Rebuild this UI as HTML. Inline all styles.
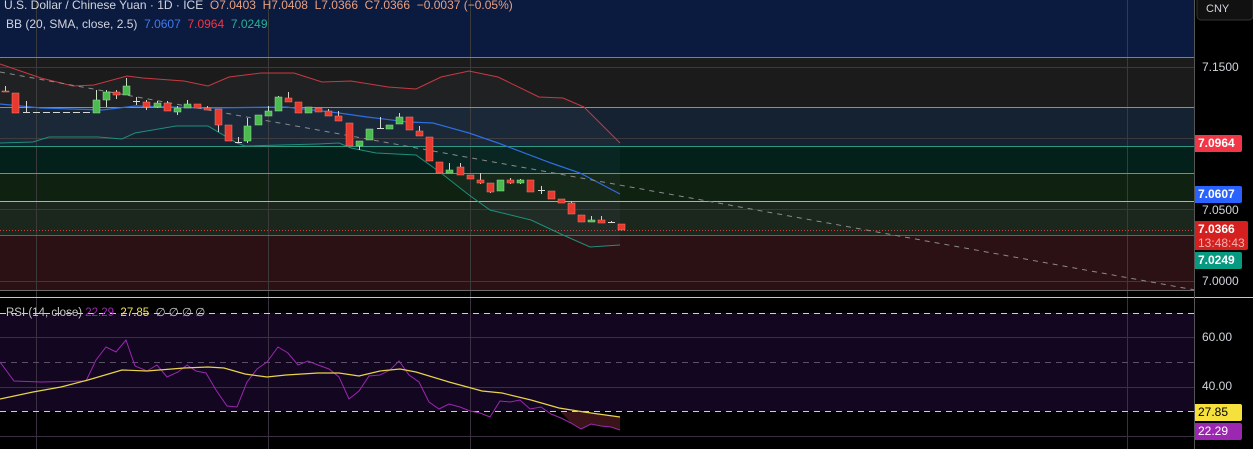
<!DOCTYPE html>
<html><head><meta charset="utf-8"><style>
body{margin:0;width:1253px;height:449px;overflow:hidden;background:#000;font-family:"Liberation Sans",sans-serif;}
.t{position:absolute;font-size:11.5px;white-space:nowrap;}
.lb{position:absolute;left:1195px;width:47px;height:17px;font-size:12px;line-height:17px;color:#fff;padding-left:3px;box-sizing:border-box;border-radius:0 2px 2px 0;font-weight:bold;}
.ax{position:absolute;left:1202px;font-size:12px;color:#d1d4dc;}
</style></head><body>
<svg width="1253" height="449" style="position:absolute;left:0;top:0">
<rect x="0" y="0" width="1195" height="57" fill="#0b1a3f"/>
<rect x="0" y="57" width="1195" height="50" fill="#1b1b1b"/>
<rect x="0" y="107" width="1195" height="39" fill="#152231"/>
<rect x="0" y="146" width="1195" height="27" fill="#04201a"/>
<rect x="0" y="173" width="1195" height="28" fill="#0f2212"/>
<rect x="0" y="201" width="1195" height="34" fill="#1b271d"/>
<rect x="0" y="235" width="1195" height="55" fill="#2b1014"/>
<g stroke="#3a3a3a" stroke-width="1">
<line x1="36.5" y1="0" x2="36.5" y2="449"/><line x1="268.5" y1="0" x2="268.5" y2="449"/><line x1="470.5" y1="0" x2="470.5" y2="449"/><line x1="1127.5" y1="0" x2="1127.5" y2="449"/>
<line x1="0" y1="67.5" x2="1195" y2="67.5"/><line x1="0" y1="138.5" x2="1195" y2="138.5"/><line x1="0" y1="209.5" x2="1195" y2="209.5"/><line x1="0" y1="281.5" x2="1195" y2="281.5"/>
</g>
<line x1="0" y1="57.5" x2="1195" y2="57.5" stroke="#7a7f8e"/>
<line x1="0" y1="107.5" x2="1195" y2="107.5" stroke="#5e9ad0"/>
<line x1="0" y1="146.5" x2="1195" y2="146.5" stroke="#2d9a84"/>
<line x1="0" y1="173.5" x2="1195" y2="173.5" stroke="#56a65a"/>
<line x1="0" y1="201.5" x2="1195" y2="201.5" stroke="#9ac77a"/>
<line x1="0" y1="235.5" x2="1195" y2="235.5" stroke="#c2383c"/>
<line x1="0" y1="290.5" x2="1195" y2="290.5" stroke="#6a6a6a"/>
<line x1="0" y1="230.5" x2="1195" y2="230.5" stroke="#d0403c" stroke-dasharray="1,2"/>
<polygon fill="rgba(120,140,170,0.06)" points="0,64 41,78 73,86 94,85 127,76 143,78 184,81 208,86 229,77 261,73 294,73 322,82 351,81 388,87 416,89 441,77 469,71 498,77 539,97 563,98 584,107 620,143 620,245 590,247 563,235 531,220 490,210 469,195 441,173 416,155 376,153 351,148 339,143 318,144 245,146 237,143 208,126 176,126 135,133 122,139 98,137 49,137 33,142 0,143"/>
<polyline fill="none" stroke="#c83a42" stroke-width="1" points="0,64 41,78 73,86 94,85 127,76 143,78 184,81 208,86 229,77 261,73 294,73 322,82 351,81 388,87 416,89 441,77 469,71 498,77 539,97 563,98 584,107 620,143"/>
<polyline fill="none" stroke="#2e6ee0" stroke-width="1.2" points="0,104 41,108 102,110 135,106 204,108 286,107 339,113 367,117 408,122 433,123 469,133 498,143 551,163 580,173 620,194"/>
<polyline fill="none" stroke="#1e8f7a" stroke-width="1" points="0,143 33,142 49,137 98,137 122,139 135,133 176,126 208,126 237,143 245,146 318,144 339,143 351,148 376,153 416,155 441,173 469,195 490,210 531,220 563,235 590,247 620,245"/>
<line x1="0" y1="72" x2="1195" y2="290" stroke="#8a8a8a" stroke-dasharray="5,5"/>
<g id="c" stroke-width="1"></g>
<rect x="0" y="298" width="1195" height="151" fill="#000"/>
<line x1="0" y1="297.5" x2="1253" y2="297.5" stroke="#c8c8c8"/>
<rect x="0" y="313" width="1195" height="98" fill="#120620"/>
<g stroke="#3a3040"><line x1="0" y1="337.5" x2="1195" y2="337.5"/><line x1="0" y1="387.5" x2="1195" y2="387.5"/><line x1="0" y1="436.5" x2="1195" y2="436.5"/>
<line x1="36.5" y1="298" x2="36.5" y2="449"/><line x1="268.5" y1="298" x2="268.5" y2="449"/><line x1="470.5" y1="298" x2="470.5" y2="449"/><line x1="1127.5" y1="298" x2="1127.5" y2="449"/></g>
<g stroke="#cfcfcf" stroke-dasharray="6,5"><line x1="0" y1="313.5" x2="1195" y2="313.5"/><line x1="0" y1="411.5" x2="1195" y2="411.5"/></g>
<line x1="0" y1="362.5" x2="1195" y2="362.5" stroke="#5a5068" stroke-dasharray="6,5"/>
<polygon fill="#3a1418" points="561,412 571,423 581,429 591,424 601,426 611,427 620,430 620,417 584,412"/>
<polyline fill="none" stroke="#9c27b0" stroke-width="1" points="0,362 14,381 41,382 86,381 96,360 106,347 116,352 126,340 135,366 147,371 157,365 167,377 178,372 187,365 196,371 206,373 216,390 227,406 237,407 247,382 257,369 267,362 278,347 288,353 298,365 308,361 318,365 329,369 339,377 349,399 359,391 369,376 380,375 390,370 399,361 409,375 419,382 429,402 439,409 449,404 460,407 470,411 480,413 490,417 500,401 510,402 520,400 530,409 541,407 551,414 561,418 571,423 581,429 591,424 601,426 611,427 620,430"/>
<polyline fill="none" stroke="#e8d44a" stroke-width="1.2" points="0,399 33,392 61,387 88,380 122,370 147,371 184,368 208,367 224,368 245,374 267,377 286,375 318,373 339,373 359,376 380,371 400,369 416,372 449,382 482,391 502,393 531,400 559,408 584,412 620,417"/>
<line x1="1194.5" y1="0" x2="1194.5" y2="449" stroke="#555"/>
<rect x="1197" y="-4" width="56" height="24" rx="4" fill="#111" stroke="#333"/>
</svg>
<script>
var d=[[5,91,91,86,92,'r'],[15,93,113,93,113,'r'],[26,112,112,101,113,'d'],[36,112,112,112,112,'d'],[46,112,112,112,112,'d'],[56,112,112,112,112,'d'],[66,112,112,112,112,'d'],[76,112,112,112,112,'d'],[86,112,112,112,112,'d'],[96,113,100,90,113,'g'],[106,100,92,90,107,'g'],[116,92,95,90,99,'r'],[126,95,86,78,95,'g'],[136,101,101,97,105,'d'],[146,102,107,100,110,'r'],[157,107,103,101,108,'g'],[167,103,111,101,111,'r'],[177,112,108,106,115,'g'],[187,108,104,100,108,'g'],[197,104,108,104,108,'r'],[207,108,110,106,110,'r'],[218,109,125,109,132,'r'],[228,125,141,125,141,'r'],[238,142,142,137,143,'d'],[247,141,126,118,143,'g'],[258,125,115,115,125,'g'],[268,116,111,106,116,'g'],[278,111,97,96,111,'g'],[288,98,102,92,102,'r'],[298,102,113,102,113,'r'],[308,113,107,107,113,'g'],[318,108,112,108,112,'r'],[328,111,116,109,116,'r'],[338,116,121,111,121,'r'],[349,123,146,123,146,'r'],[359,146,141,141,150,'g'],[369,140,129,129,140,'g'],[380,128,128,117,128,'d'],[389,129,125,125,129,'g'],[399,124,117,113,124,'g'],[409,117,130,117,130,'r'],[419,131,136,126,136,'r'],[429,137,161,137,161,'r'],[439,162,173,162,173,'r'],[449,173,170,163,173,'g'],[460,167,175,163,175,'r'],[470,175,179,175,179,'r'],[480,180,183,173,184,'r'],[490,183,192,183,193,'r'],[500,191,180,180,191,'g'],[510,180,183,178,184,'r'],[520,183,180,179,184,'g'],[530,180,192,180,192,'r'],[541,190,190,186,194,'d'],[551,191,199,191,199,'r'],[561,199,203,199,203,'r'],[571,203,214,201,214,'r'],[581,215,222,215,222,'r'],[591,222,220,216,222,'g'],[601,220,223,216,223,'r'],[611,222,222,221,223,'d'],[621,224,230,224,230,'r']];
var s='';d.forEach(function(c){
if(c[5]=='d'){s+='<line x1="'+(c[0]+.5)+'" y1="'+c[3]+'" x2="'+(c[0]+.5)+'" y2="'+c[4]+'" stroke="#d8d8d8"/><line x1="'+(c[0]-3)+'" y1="'+(c[1]+.5)+'" x2="'+(c[0]+4)+'" y2="'+(c[1]+.5)+'" stroke="#d8d8d8"/>';return;}
var col=c[5]=='r'?'#e8392f':'#4cbb4f';var st=c[5]=='r'?'#f08070':'#9be09a';
s+='<line x1="'+(c[0]+.5)+'" y1="'+c[3]+'" x2="'+(c[0]+.5)+'" y2="'+c[4]+'" stroke="'+(c[5]=='r'?'#d8d0c8':'#c8e0c8')+'"/>';
var t=Math.min(c[1],c[2]),h=Math.max(1,Math.abs(c[1]-c[2]));
s+='<rect x="'+(c[0]-3)+'" y="'+t+'" width="7" height="'+h+'" fill="'+col+'" stroke="'+st+'" stroke-width="0.5"/>';});
document.getElementById('c').innerHTML=s;
</script>
<div class="t" style="left:4px;top:-2px;font-size:12px;color:#d1d4dc">U.S. Dollar / Chinese Yuan · 1D · ICE &nbsp;<span style="color:#e8a080">O7.0403 &nbsp;H7.0408 &nbsp;L7.0366 &nbsp;C7.0366 &nbsp;−0.0037 (−0.05%)</span></div>
<div class="t" style="left:6px;top:17px;font-size:12px;color:#d1d4dc">BB (20, SMA, close, 2.5) &nbsp;<span style="color:#3d7cf0">7.0607</span> &nbsp;<span style="color:#f23645">7.0964</span> &nbsp;<span style="color:#2bb094">7.0249</span></div>
<div class="t" style="left:6px;top:305px;color:#c8c8c8">RSI (14, close) <span style="color:#9c27b0">22.29</span> &nbsp;<span style="color:#f0e050">27.85</span> &nbsp;<span>∅ ∅ ∅ ∅</span></div>
<div class="ax" style="left:1206px;top:3px;font-size:11px">CNY</div>
<div class="ax" style="top:60px">7.1500</div>
<div class="lb" style="top:135px;background:#f23645">7.0964</div>
<div class="lb" style="top:186px;background:#2962ff">7.0607</div>
<div class="ax" style="top:203px">7.0500</div>
<div class="lb" style="top:221px;height:29px;width:53px;background:#d4201e;line-height:14px;padding-top:1px">7.0366<br><span style="font-weight:normal;color:#f5b0b0">13:48:43</span></div>
<div class="lb" style="top:252px;background:#089981">7.0249</div>
<div class="ax" style="top:274px">7.0000</div>
<div class="ax" style="top:330px">60.00</div>
<div class="ax" style="top:379px">40.00</div>
<div class="lb" style="top:404px;background:#f5e03c;color:#000;font-weight:normal">27.85</div>
<div class="lb" style="top:423px;background:#9c27b0;font-weight:normal">22.29</div>
</body></html>
